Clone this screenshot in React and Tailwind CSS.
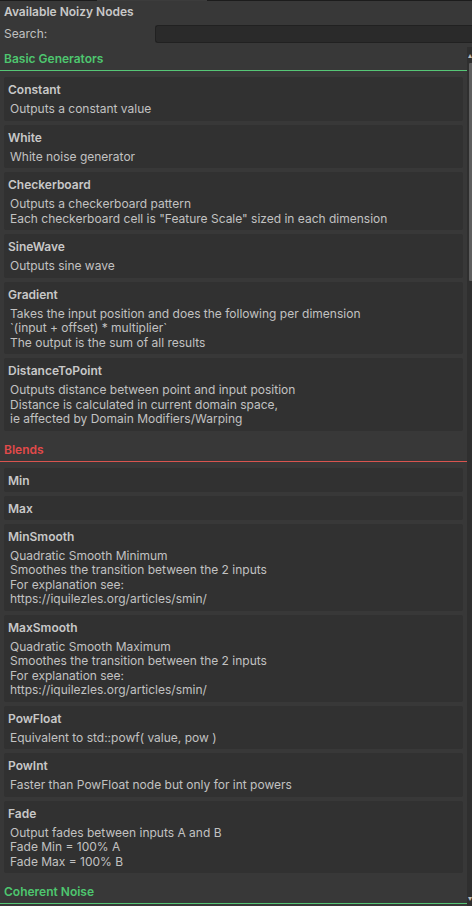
import React from 'react';

const sections = [
    {
        name: 'Basic Generators',
        color: 'green',
        nodes: [
            { title: 'Constant', lines: ['Outputs a constant value'] },
            { title: 'White', lines: ['White noise generator'] },
            {
                title: 'Checkerboard',
                lines: [
                    'Outputs a checkerboard pattern',
                    'Each checkerboard cell is "Feature Scale" sized in each dimension',
                ],
            },
            { title: 'SineWave', lines: ['Outputs sine wave'] },
            {
                title: 'Gradient',
                lines: [
                    'Takes the input position and does the following per dimension',
                    '`(input + offset) * multiplier`',
                    'The output is the sum of all results',
                ],
            },
            {
                title: 'DistanceToPoint',
                lines: [
                    'Outputs distance between point and input position',
                    'Distance is calculated in current domain space,',
                    'ie affected by Domain Modifiers/Warping',
                ],
            },
        ],
    },
    {
        name: 'Blends',
        color: 'red',
        nodes: [
            { title: 'Min', lines: [] },
            { title: 'Max', lines: [] },
            {
                title: 'MinSmooth',
                lines: [
                    'Quadratic Smooth Minimum',
                    'Smoothes the transition between the 2 inputs',
                    'For explanation see:',
                    'https://iquilezles.org/articles/smin/',
                ],
            },
            {
                title: 'MaxSmooth',
                lines: [
                    'Quadratic Smooth Maximum',
                    'Smoothes the transition between the 2 inputs',
                    'For explanation see:',
                    'https://iquilezles.org/articles/smin/',
                ],
            },
            { title: 'PowFloat', lines: ['Equivalent to std::powf( value, pow )'] },
            { title: 'PowInt', lines: ['Faster than PowFloat node but only for int powers'] },
            {
                title: 'Fade',
                lines: ['Output fades between inputs A and B', 'Fade Min = 100% A', 'Fade Max = 100% B'],
            },
        ],
    },
    { name: 'Coherent Noise', color: 'green', nodes: [] },
];

function NodeCard({ node }) {
    const hasText = node.lines.length > 0;
    return (
        <div className={hasText ? 'bg-[#313131] rounded-[2px] pt-[4px] pb-[4px] pl-[4px]' : 'bg-[#313131] rounded-[2px] pt-[4px] pb-[3px] pl-[4px]'}>
            <div className="font-semibold text-[#c8c8c8] leading-[17px]">{node.title}</div>
            {hasText && (
                <div className="mt-[4px] pl-[2px] text-[#c2c2c2] leading-[14.5px] whitespace-pre">
                    {node.lines.map((line, i) => (
                        <div key={i}>{line}</div>
                    ))}
                </div>
            )}
        </div>
    );
}

function Section({ section }) {
    const green = section.color === 'green';
    return (
        <div className="mb-[11px]">
            <div
                className={
                    green
                        ? 'font-semibold text-[#4ec66f] pl-[4px] pb-[3px] leading-[16px] border-b border-[#56c676]'
                        : 'font-semibold text-[#e24a4a] pl-[4px] pb-[3px] leading-[16px] border-b border-[#d9544f]'
                }
            >
                {section.name}
            </div>
            <div className="flex flex-col gap-[4px] mt-[6px] pl-[4px] pr-[4px]">
                {section.nodes.map((node) => (
                    <NodeCard key={node.title} node={node} />
                ))}
            </div>
        </div>
    );
}

export default function App() {
    return (
        <div
            className="w-[472px] h-[906px] bg-[#383838] text-[12px] text-[#c4c4c4] flex flex-col overflow-hidden"
            style={{ fontFamily: 'Inter, "Noto Sans", sans-serif' }}
        >
            <div className="flex h-px">
                <div className="w-[97px] bg-[#1c1c1c]"></div>
                <div className="w-[110px] bg-[#3c3c3c]"></div>
                <div className="flex-1 bg-[#1c1c1c]"></div>
            </div>
            <div className="font-semibold text-[#c8c8c8] pl-[4px] pt-[1px] leading-[20px] h-[22px]">Available Noizy Nodes</div>
            <div className="flex items-center h-[20px] mt-[1px] pl-[4px]">
                <div className="w-[151px] text-[#c0c0c0]">Search:</div>
                <div className="flex-1 h-[18px] bg-[#2a2a2a] border border-[#212121] rounded-l-[3px] border-r-0"></div>
            </div>
            <div className="flex flex-1 min-h-0 mt-[3px]">
                <div className="flex-1 overflow-hidden pt-[4px]">
                    {sections.map((s) => (
                        <Section key={s.name} section={s} />
                    ))}
                </div>
                <div className="w-[5px] flex flex-col bg-[#2f2f2f]">
                    <div className="h-[16px] text-[8px] leading-[16px] text-[#bbbbbb] text-center">▴</div>
                    <div className="h-[218px] ml-[2px] bg-[#5e5e5e] rounded-l-[1px]"></div>
                    <div className="flex-1"></div>
                    <div className="h-[16px] text-[8px] leading-[16px] text-[#bbbbbb] text-center">▾</div>
                </div>
            </div>
        </div>
    );
}
